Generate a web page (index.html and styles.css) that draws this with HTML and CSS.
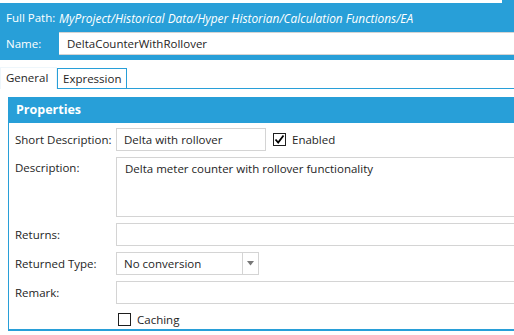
FILE: index.html
```html
<!DOCTYPE html>
<html lang="en">
<head>
    <meta charset="UTF-8">
    <title>Calculation Function</title>
    <link rel="stylesheet" href="styles.css">
</head>
<body>
    <div class="top-strip"><div class="top-strip-white"></div></div>
    <div class="header">
        <div class="header-row path-row">
            <span class="header-label">Full Path:</span>
            <span class="path">MyProject/Historical Data/Hyper Historian/Calculation Functions/EA</span>
        </div>
        <div class="header-row">
            <span class="header-label">Name:</span>
            <div class="name-box">DeltaCounterWithRollover</div>
        </div>
    </div>

    <div class="tabs">
        <div class="tab active">General</div>
        <div class="tab">Expression</div>
        <div class="tab-rest"></div>
    </div>

    <div class="panel">
        <div class="panel-title">Properties</div>
        <div class="form">
            <div class="row">
                <div class="label">Short Description:</div>
                <div class="field short">Delta with rollover</div>
                <label class="check"><span class="box checked">
                    <svg width="11" height="11" viewBox="0 0 11 11"><path d="M1.5 5.5 L4.2 8.5 L9.5 1.5" fill="none" stroke="#000" stroke-width="1.8"/></svg>
                </span>Enabled</label>
            </div>
            <div class="row top">
                <div class="label">Description:</div>
                <div class="field wide area">Delta meter counter with rollover functionality</div>
            </div>
            <div class="row">
                <div class="label">Returns:</div>
                <div class="field wide"></div>
            </div>
            <div class="row">
                <div class="label">Returned Type:</div>
                <div class="field short select">
                    <span class="select-text">No conversion</span>
                    <span class="select-btn"><svg width="7" height="5" viewBox="0 0 7 5"><path d="M0 0 H7 L3.5 4.5 Z" fill="#777"/></svg></span>
                </div>
            </div>
            <div class="row">
                <div class="label">Remark:</div>
                <div class="field wide"></div>
            </div>
            <div class="row">
                <div class="label"></div>
                <label class="check caching"><span class="box"></span>Caching</label>
            </div>
        </div>
    </div>
</body>
</html>
```

FILE: styles.css
```css
body {
    margin: 0;
    width: 514px;
    height: 335px;
    overflow: hidden;
    font-family: "Open Sans", "Noto Sans", sans-serif;
    font-size: 11.5px;
    color: #1e1e1e;
    background: #fff;
}
.top-strip {
    height: 3px;
    background: #289fd8;
}
.top-strip-white {
    width: 502px;
    height: 3px;
    background: #fff;
}
.header {
    background: #289fd8;
    color: #fff;
    padding: 0 0 5px 6px;
}
.header-row {
    display: flex;
    align-items: center;
}
.path-row {
    height: 29px;
}
.header-label {
    width: 53px;
    flex-shrink: 0;
}
.path {
    font-style: italic;
    font-size: 11.9px;
    white-space: nowrap;
}
.name-box {
    flex: 1;
    height: 21px;
    line-height: 21px;
    background: #fff;
    color: #1e1e1e;
    border-top: 1px solid #d4d4d4;
    border-bottom: 1px solid #d4d4d4;
    padding-left: 8px;
}
.tabs {
    display: flex;
    align-items: flex-end;
    margin-top: 7px;
    height: 22px;
}
.tab {
    height: 19px;
    line-height: 19px;
    padding: 0 5px;
    border: 1px solid #289fd8;
}
.tab.active {
    height: 21px;
    width: 45px;
    border: 1px solid #eef6fb;
    border-bottom: none;
    line-height: 20px;
}
.tab-rest {
    flex: 1;
    border-bottom: 1px solid #289fd8;
}
.panel {
    margin: 8px 0 0 8px;
    border-left: 1px solid #289fd8;
    border-bottom: 2px solid #289fd8;
    height: 232px;
}
.panel-title {
    background: #289fd8;
    color: #fff;
    font-weight: bold;
    font-size: 12.5px;
    height: 26px;
    line-height: 26px;
    padding-left: 7px;
}
.form {
    padding: 5px 0 0 6px;
    display: flex;
    flex-direction: column;
    gap: 6px;
}
.row {
    display: flex;
    align-items: center;
}
.row.top {
    align-items: flex-start;
}
.label {
    width: 101px;
    flex-shrink: 0;
    white-space: nowrap;
}
.row.top .label {
    padding-top: 3px;
}
.field {
    height: 21px;
    line-height: 21px;
    border: 1px solid #d4d4d4;
    padding-left: 7px;
    box-sizing: content-box;
}
.field.short {
    width: 141px;
}
.field.wide {
    flex: 1;
    border-right: none;
}
.field.area {
    line-height: 18px;
    padding-top: 2px;
    padding-left: 8px;
    height: 56px;
}
.select {
    display: flex;
    padding-left: 0;
}
.select-text {
    flex: 1;
    padding-left: 7px;
}
.select-btn {
    width: 15px;
    border-left: 1px solid #d4d4d4;
    display: flex;
    align-items: center;
    justify-content: center;
}
.check {
    display: flex;
    align-items: center;
    gap: 6px;
    margin-left: 7px;
}
.caching {
    margin-left: 2px;
    height: 19px;
}
.box {
    width: 11px;
    height: 11px;
    border: 1px solid #1e1e1e;
    display: flex;
    align-items: center;
    justify-content: center;
}
```
